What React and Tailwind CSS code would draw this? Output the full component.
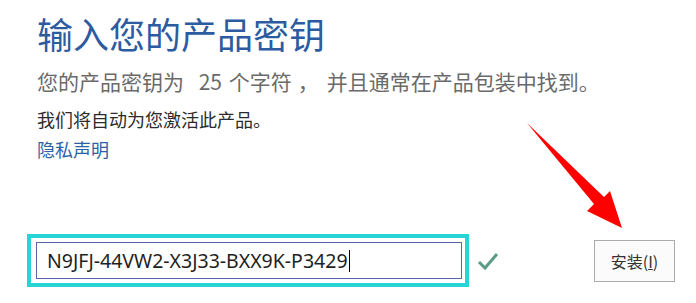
export default function App() {
  return (
    <div className="relative w-[696px] h-[303px] overflow-hidden bg-white font-['Noto_Sans_CJK_SC',sans-serif]">
      {/* text block */}
      <div className="flex flex-col pl-[37px]">
        <h1 className="mt-[15px] text-[36px] leading-[36px] font-normal text-[#2d5b9f]">输入您的产品密钥</h1>
        <p className="mt-[20px] text-[21px] leading-[21px] text-[#6a6a6a]">
          您的产品密钥为 <span className="pl-[10px] pr-[2px]">25</span> 个字符<span className="pl-[6px] pr-[8px]">，</span>并且通常在产品包装中找到。
        </p>
        <p className="mt-[18px] text-[18px] leading-[18px] text-[#2b2b2b]">我们将自动为您激活此产品。</p>
        <a href="#" className="mt-[12px] w-fit text-[18px] leading-[18px] text-[#2f5fa6]">隐私声明</a>
      </div>

      {/* key row */}
      <div className="mt-[76px] flex items-center pl-[27px] pr-[21px]">
        <div className="border-4 border-[#27d4d6] pt-[4px] pb-[4px] pl-[5px] pr-[3px]">
          <div className="flex h-[37px] w-[426px] items-center border border-[#5666ac] pl-[10px] font-['Noto_Sans',sans-serif] text-[19.5px] text-[#1f1f1f]">
            <span>N9JFJ-44VW2-X3J33-BXX9K-P3429</span>
            <span className="ml-[1px] h-[22px] w-[1.5px] bg-black" />
          </div>
        </div>
        <svg className="ml-[8px] h-[20px] w-[22px]" viewBox="0 0 22 20">
          <polyline points="2,11 8,17 20,3" fill="none" stroke="#5a9c86" strokeWidth="3" />
        </svg>
        <button className="ml-auto flex h-[42px] w-[81px] items-center justify-center border border-[#ababab] bg-[#fbfbfb] text-[16px] text-[#333]">
          安装(<span className="underline">I</span>)
        </button>
      </div>

      {/* annotation arrow */}
      <svg className="pointer-events-none absolute left-0 top-0 h-[303px] w-[696px]" viewBox="0 0 696 303">
        <polygon points="527,123 604,197 610,191 622,228 587,211 594,204" fill="#ff0000" />
      </svg>
    </div>
  );
}
